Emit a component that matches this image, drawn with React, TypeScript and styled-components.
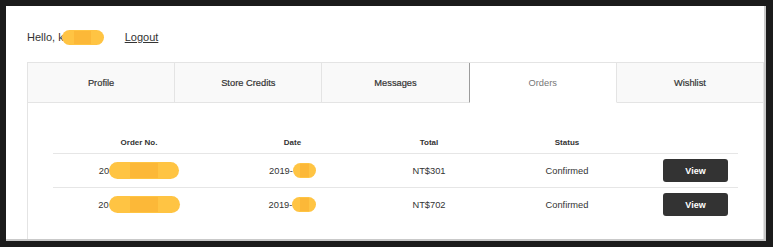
import React from 'react';
import { styled, createGlobalStyle } from 'styled-components';

const GlobalStyle = createGlobalStyle`
  html, body {
    margin: 0;
    padding: 0;
    background: #1b1b1b;
  }
  body {
    padding: 6px 7px 6px 6px;
    font-family: "Liberation Sans", Arial, sans-serif;
    color: #333;
  }
`;

const Page = styled.div`
  box-sizing: border-box;
  width: 760px;
  height: 235px;
  background: #fff;
  border-right: 2px solid #c9c9c9;
  border-bottom: 2px solid #c9c9c9;
  display: flex;
  flex-direction: column;
  padding: 24px 0 0 21px;
  overflow: hidden;
`;

const Greeting = styled.div`
  display: flex;
  align-items: center;
  height: 14px;
  font-size: 11px;
  color: #333;
`;

const Redacted = styled.span<{ $w: number; $h?: number }>`
  position: relative;
  display: inline-block;
  width: ${(p) => p.$w}px;
  height: ${(p) => p.$h ?? 16}px;
  border-radius: 9px;
  background: #ffc443;
  vertical-align: middle;
  &::after {
    content: '';
    position: absolute;
    top: 1px;
    bottom: 1px;
    left: 30%;
    right: 30%;
    background: #fcb838;
  }
`;

const NameBlob = styled(Redacted)`
  margin-left: -2px;
`;

const LogoutLink = styled.a`
  margin-left: 21px;
  color: #333;
  text-decoration: underline;
  cursor: pointer;
`;

const TabBar = styled.div`
  display: flex;
  margin-top: 18px;
  height: 41px;
  box-sizing: border-box;
  border-top: 1px solid #e4e4e4;
  border-left: 1px solid #e4e4e4;
`;

const Tab = styled.div<{ $active?: boolean }>`
  flex: 1;
  display: flex;
  align-items: center;
  justify-content: center;
  box-sizing: border-box;
  padding-top: 1px;
  font-size: 9.3px;
  background: ${(p) => (p.$active ? '#fff' : '#f9f9f9')};
  color: ${(p) => (p.$active ? '#777' : '#333')};
  -webkit-text-stroke: ${(p) => (p.$active ? '0' : '0.2px')} #333;
  border-right: 1px solid #e4e4e4;
  border-bottom: 1px solid ${(p) => (p.$active ? '#fff' : '#e4e4e4')};
  ${(p) => p.$active && 'border-left: 1px solid #9c9c9c; margin-left: -1px;'}
`;

const Panel = styled.div`
  flex: 1;
  border-left: 1px solid #e4e4e4;
  border-right: 1px solid #e4e4e4;
  padding: 29px 25px 0 25px;
`;

const Row = styled.div<{ $head?: boolean }>`
  display: grid;
  grid-template-columns: 172px 135px 138px 138px 1fr;
  align-items: center;
  height: ${(p) => (p.$head ? 21 : 33)}px;
  border-bottom: 1px solid #e6e6e6;
  font-size: ${(p) => (p.$head ? 8 : 9.3)}px;
  font-weight: ${(p) => (p.$head ? 'bold' : 'normal')};
  color: #333;
  &:last-child {
    border-bottom: none;
  }
`;

const Cell = styled.div<{ $end?: boolean }>`
  display: flex;
  align-items: center;
  justify-content: ${(p) => (p.$end ? 'flex-end' : 'center')};
  padding-right: ${(p) => (p.$end ? 10 : 0)}px;
`;

const ViewButton = styled.button`
  width: 65px;
  height: 23px;
  border: none;
  border-radius: 3px;
  background: #333;
  color: #fff;
  font-family: inherit;
  font-size: 9px;
  font-weight: bold;
  cursor: pointer;
`;

const tabs = ['Profile', 'Store Credits', 'Messages', 'Orders', 'Wishlist'];

const orders = [
  { idBlob: 70, dateBlob: 23, total: 'NT$301', status: 'Confirmed' },
  { idBlob: 71, dateBlob: 24, total: 'NT$702', status: 'Confirmed' },
];

const App = () => {
  return (
    <>
      <GlobalStyle />
      <Page>
        <Greeting>
          Hello, k
          <NameBlob $w={42} $h={15} />
          <LogoutLink>Logout</LogoutLink>
        </Greeting>
        <TabBar>
          {tabs.map((t) => (
            <Tab key={t} $active={t === 'Orders'}>
              {t}
            </Tab>
          ))}
        </TabBar>
        <Panel>
          <Row $head>
            <Cell>Order No.</Cell>
            <Cell>Date</Cell>
            <Cell>Total</Cell>
            <Cell>Status</Cell>
            <Cell />
          </Row>
          {orders.map((o, i) => (
            <Row key={i}>
              <Cell>
                20
                <Redacted $w={o.idBlob} $h={17} />
              </Cell>
              <Cell>
                2019-
                <Redacted $w={o.dateBlob} $h={15} />
              </Cell>
              <Cell>{o.total}</Cell>
              <Cell>{o.status}</Cell>
              <Cell $end>
                <ViewButton>View</ViewButton>
              </Cell>
            </Row>
          ))}
        </Panel>
      </Page>
    </>
  );
};

export default App;
